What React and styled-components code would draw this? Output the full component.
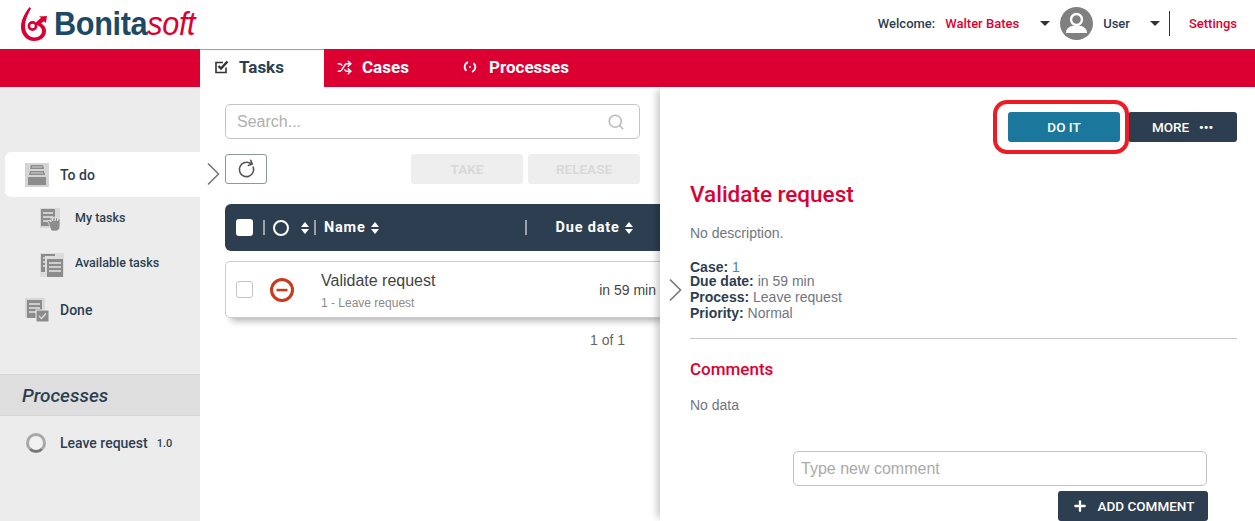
import React from "react";
import styled, { createGlobalStyle } from "styled-components";
import { RotateCw, Search, Shuffle, Plus } from "lucide-react";

const RED = "#dc0032";
const NAVY = "#2c3e50";
const HEADING = '"Roboto", "Liberation Sans", sans-serif';
const BODY = '"Liberation Sans", Arial, sans-serif';

const GlobalStyle = createGlobalStyle`
  html, body {
    margin: 0;
    height: 521px;
    overflow: hidden;
    background: #fff;
    font-family: ${BODY};
  }
  * { box-sizing: border-box; }
`;

const Page = styled.div`
  position: relative;
  width: 1255px;
  height: 521px;
  overflow: hidden;
  display: flex;
  flex-direction: column;
`;

const Header = styled.header`
  height: 49px;
  display: flex;
  align-items: center;
  justify-content: space-between;
  padding: 0 18px 2px 20px;
`;
const Logo = styled.div`
  display: flex;
  align-items: center;
  gap: 4px;
`;
const LogoText = styled.div`
  font-family: "Liberation Sans Narrow", "Liberation Sans", sans-serif;
  font-weight: 700;
  font-size: 33px;
  line-height: 36px;
  letter-spacing: -0.4px;
  color: #1c4a66;
  width: 126px;
  transform: scaleX(0.93);
  transform-origin: left center;
  white-space: nowrap;
  padding-top: 1px;
`;
const LogoAccent = styled.span`
  color: ${RED};
  font-style: italic;
  font-weight: 400;
`;
const UserBar = styled.div`
  display: flex;
  align-items: center;
  font-family: ${HEADING};
  font-size: 13px;
  font-weight: 500;
  color: ${NAVY};
`;
const UserLink = styled.span`
  color: ${({ $red }) => ($red ? RED : NAVY)};
  margin-left: ${({ $gap }) => $gap || 0}px;
`;
const Caret = styled.span`
  width: 0;
  height: 0;
  margin-left: ${({ $gap }) => $gap}px;
  border-left: 5px solid transparent;
  border-right: 5px solid transparent;
  border-top: 5px solid #333;
`;
const Rule = styled.span`
  width: 1px;
  height: 25px;
  margin: 0 19px 0 9px;
  background: #333;
`;

const NavBar = styled.nav`
  height: 38px;
  background: ${RED};
  padding-left: 200px;
  display: flex;
  align-items: stretch;
`;
const NavTab = styled.div`
  width: ${({ $w }) => $w}px;
  display: flex;
  align-items: center;
  gap: ${({ $gap }) => $gap}px;
  padding-left: ${({ $pad }) => $pad}px;
  padding-bottom: 2px;
  font-family: ${HEADING};
  font-size: 17px;
  font-weight: 700;
  color: ${({ $active }) => ($active ? NAVY : "#fff")};
  background: ${({ $active }) => ($active ? "#fff" : "transparent")};
  box-shadow: ${({ $active }) => ($active ? "inset 0 2px 1px -1px #999" : "none")};
`;

const Main = styled.main`
  flex: 1;
  display: flex;
  min-height: 0;
`;

const Sidebar = styled.aside`
  width: 200px;
  background: #ececec;
  padding-top: 65px;
  font-family: ${HEADING};
  font-weight: 500;
  color: ${NAVY};
`;
const NavItem = styled.div`
  height: 45px;
  margin-left: 5px;
  padding-left: ${({ $sub }) => ($sub ? 35 : 20)}px;
  display: flex;
  align-items: center;
  gap: ${({ $sub }) => ($sub ? 11 : 11)}px;
  font-size: ${({ $sub }) => ($sub ? 12.5 : 14)}px;
  background: ${({ $active }) => ($active ? "#fff" : "transparent")};
  border-radius: 6px 0 0 6px;
`;
const NavLabel = styled.span`
  position: relative;
  top: ${({ $sub }) => ($sub ? -2 : 0)}px;
`;
const SectionTitle = styled.div`
  margin-top: 42px;
  height: 42px;
  padding-left: 22px;
  display: flex;
  align-items: center;
  font-size: 19px;
  font-style: italic;
  font-weight: 500;
  background: #dedede;
  border-top: 1px solid #d6d6d6;
  border-bottom: 1px solid #d6d6d6;
`;
const ProcessRow = styled.div`
  height: 54px;
  padding-left: 26px;
  display: flex;
  align-items: center;
  font-size: 14px;
`;
const Ring = styled.span`
  width: 20px;
  height: 20px;
  margin-right: 14px;
  border-radius: 50%;
  border: 3px solid #a8a8a8;
  border-bottom-color: #777;
  background: #f2f2f2;
`;
const Version = styled.span`
  margin-left: 9px;
  font-size: 11px;
`;

const ListPane = styled.section`
  width: 460px;
  padding: 17px 0 0 25px;
  position: relative;
`;
const SearchBox = styled.div`
  width: 415px;
  height: 35px;
  padding: 0 14px 0 11px;
  display: flex;
  align-items: center;
  justify-content: space-between;
  border: 1px solid #c4c4c4;
  border-radius: 5px;
  font-size: 16px;
  color: #b0b0b0;
`;
const Toolbar = styled.div`
  width: 415px;
  margin-top: 15px;
  display: flex;
  gap: 5px;
`;
const RefreshButton = styled.div`
  width: 42px;
  height: 30px;
  margin-right: auto;
  display: flex;
  align-items: center;
  justify-content: center;
  border: 1px solid #8a9a9a;
  border-radius: 3px;
  color: #555;
`;
const GhostButton = styled.div`
  width: 112px;
  height: 30px;
  display: flex;
  align-items: center;
  justify-content: center;
  background: #eeeeee;
  border-radius: 3px;
  font-family: ${HEADING};
  font-size: 13.5px;
  font-weight: 700;
  color: #d9d9d9;
`;
const TableHead = styled.div`
  height: 47px;
  margin-top: 20px;
  background: ${NAVY};
  border-radius: 6px 0 0 6px;
  display: flex;
  align-items: center;
  font-family: ${HEADING};
  font-size: 14.5px;
  font-weight: 700;
  letter-spacing: 0.8px;
  color: #fff;
  position: relative;
  z-index: 1;
`;
const HeadCheck = styled.span`
  width: 17px;
  height: 17px;
  margin-left: 11px;
  background: #fff;
  border-radius: 3px;
`;
const HeadSep = styled.span`
  width: 2px;
  height: 15px;
  margin-left: ${({ $gap }) => $gap}px;
  background: #9aa3ad;
`;
const HeadCircle = styled.span`
  width: 16px;
  height: 16px;
  margin-left: 8px;
  border: 2px solid #fff;
  border-radius: 50%;
`;
const Sort = styled.span`
  margin-left: ${({ $gap }) => $gap}px;
  display: inline-flex;
  flex-direction: column;
  gap: 2px;
  &::before, &::after {
    content: "";
    width: 0;
    height: 0;
    border-left: 4.5px solid transparent;
    border-right: 4.5px solid transparent;
  }
  &::before { border-bottom: 5px solid #fff; }
  &::after { border-top: 5px solid #fff; }
`;
const HeadLabel = styled.span`
  margin-left: ${({ $gap }) => $gap}px;
`;
const TaskRow = styled.div`
  height: 57px;
  margin-top: 10px;
  display: flex;
  align-items: center;
  background: #fff;
  border: 1px solid #ccc;
  border-right: 0;
  border-radius: 5px 0 0 5px;
  box-shadow: 4px 5px 7px -2px rgba(0, 0, 0, 0.3);
`;
const RowCheck = styled.span`
  width: 17px;
  height: 17px;
  margin-left: 10px;
  border: 1px solid #c4c4c4;
  border-radius: 3px;
`;
const RowIcon = styled.svg`
  width: 26px;
  height: 26px;
  margin-left: 16px;
`;
const RowText = styled.div`
  margin-left: 26px;
  flex: 1;
`;
const RowTitle = styled.div`
  font-size: 16px;
  line-height: 20px;
  color: #444;
  margin-top: 3px;
`;
const RowSub = styled.div`
  font-size: 12px;
  line-height: 16px;
  margin-top: 4px;
  color: #8a8a8a;
`;
const RowDue = styled.div`
  font-size: 14px;
  color: #444;
  margin-right: 4px;
`;
const Pager = styled.div`
  width: 400px;
  margin-top: 14px;
  text-align: right;
  font-size: 14px;
  color: #666;
`;

const DetailPane = styled.section`
  flex: 1;
  position: relative;
  z-index: 2;
  padding: 25px 18px 0 30px;
  background: #fff;
  box-shadow: -6px 0 7px -3px rgba(0, 0, 0, 0.22);
`;
const Actions = styled.div`
  display: flex;
  justify-content: flex-end;
  gap: 8px;
`;
const ActionButton = styled.div`
  width: ${({ $w }) => $w}px;
  height: 30px;
  display: flex;
  align-items: center;
  justify-content: center;
  gap: 10px;
  background: ${({ $teal }) => ($teal ? "#1b779b" : NAVY)};
  border-radius: 3px;
  font-family: ${HEADING};
  font-size: 13.5px;
  font-weight: 500;
  color: #fff;
`;
const Dots = styled.span`
  font-size: 13px;
  letter-spacing: 0;
  line-height: 1;
  font-weight: 700;
`;
const Highlight = styled.div`
  position: absolute;
  left: 333px;
  top: 13px;
  width: 136px;
  height: 54px;
  border: 4px solid #ed1c24;
  border-radius: 14px;
`;
const DetailTitle = styled.h1`
  margin: 38px 0 0;
  font-family: ${HEADING};
  font-size: 22.5px;
  line-height: 28px;
  font-weight: 500;
  color: ${RED};
`;
const Muted = styled.p`
  margin: ${({ $top }) => $top}px 0 0;
  font-size: 14px;
  line-height: 16px;
  color: #6f7680;
`;
const Facts = styled.dl`
  margin: 18px 0 0;
  font-size: 14px;
  color: #6f7680;
`;
const Fact = styled.div`
  height: ${({ $h }) => $h || 16}px;
  line-height: 16px;
`;
const FactName = styled.dt`
  display: inline;
  font-weight: 700;
  color: ${NAVY};
`;
const FactValue = styled.dd`
  display: inline;
  margin: 0;
  color: ${({ $link }) => ($link ? "#4a86a8" : "#6f7680")};
`;
const Divider = styled.hr`
  margin: 17px 0 0;
  border: 0;
  border-top: 1px solid #c8c8c8;
`;
const SubHeading = styled.h2`
  margin: 19px 0 0;
  font-family: ${HEADING};
  font-size: 17px;
  line-height: 22px;
  font-weight: 500;
  color: ${RED};
`;
const CommentForm = styled.div`
  margin-top: 38px;
  margin-left: 103px;
  width: 415px;
  display: flex;
  flex-direction: column;
  align-items: flex-end;
`;
const CommentInput = styled.div`
  width: 414px;
  height: 35px;
  align-self: flex-start;
  padding-left: 7px;
  display: flex;
  align-items: center;
  border: 1px solid #c4c4c4;
  border-radius: 5px;
  font-size: 16px;
  color: #aaa;
`;
const AddButton = styled.div`
  width: 150px;
  height: 30px;
  margin-top: 5px;
  display: flex;
  align-items: center;
  justify-content: center;
  gap: 10px;
  background: ${NAVY};
  border-radius: 3px;
  font-family: ${HEADING};
  font-size: 13.5px;
  font-weight: 500;
  color: #fff;
`;
const Chevron = styled.svg`
  position: absolute;
  width: 14px;
  height: 24px;
  left: ${({ $x }) => $x}px;
  top: ${({ $y }) => $y}px;
  z-index: 3;
`;

const ChevronMark = ({ x, y }) => (
  <Chevron $x={x} $y={y} viewBox="0 0 14 24">
    <path d="M2 1.5 12.5 12 2 22.5" fill="none" stroke="#777" strokeWidth="1.6" />
  </Chevron>
);

const LogoMark = () => (
  <svg width="30" height="36" viewBox="0 0 30 36">
    <path
      d="M9.5 1C5 7 1 13.5 1 21c0 8 6 14 13 14 7.5 0 12-4.5 12-10 0-3.5-2-6-5-7.5l3-2.2 1.800 1.700L27 10l-8 .5 2 1.500-4 3.200c-2 1.600-1.500 3.200.5 4 2.500 1 4.500 3 4.500 5.800 0 3.500-3 6.500-7.500 6.500C9.500 31.500 5 27 5 20.500 5 14 8 8 11 2.500Z"
      fill={RED}
    />
    <circle cx="12.500" cy="20" r="3.600" fill="none" stroke={RED} strokeWidth="2.600" />
  </svg>
);

const Avatar = () => (
  <svg width="33" height="33" viewBox="0 0 33 33">
    <circle cx="16.500" cy="16.500" r="16.500" fill="#808080" />
    <circle cx="16.500" cy="12.500" r="5.500" fill="none" stroke="#fff" strokeWidth="2.400" />
    <path d="M6 26c0-5 4-7.500 10.500-7.500S27 21 27 26Z" fill="#fff" />
  </svg>
);

const CheckSquareIcon = () => (
  <svg width="14" height="14" viewBox="0 0 14 14">
    <path d="M11 7.500V12.500H1V2.500H8" fill="none" stroke="#333" strokeWidth="1.600" />
    <path d="M3.500 6 6 8.500 12.500 1.500" fill="none" stroke="#333" strokeWidth="2.400" />
  </svg>
);

const ProcessIcon = () => (
  <svg width="14" height="14" viewBox="0 0 14 14" fill="none" stroke="#fff" strokeWidth="1.800">
    <path d="M5 2.200A5 5 0 0 0 3.500 10.800" />
    <path d="M9 11.800A5 5 0 0 0 10.500 3.200" />
    <circle cx="7" cy="7" r="1" fill="#fff" stroke="none" />
  </svg>
);

const InboxIcon = () => (
  <svg width="24" height="24" viewBox="0 0 24 24">
    <rect width="24" height="24" fill="#d4d4d4" />
    <path d="M6 2h12l1 4H5ZM5 8h14l1 4H4ZM3 14h18v8H3Z" fill="#8c8c8c" />
    <path d="M7 4h10M6 10h12" stroke="#d4d4d4" />
  </svg>
);

const SheetLines = ({ x, y, w, h }) => (
  <g>
    <rect x={x} y={y} width={w} height={h} fill="#8c8c8c" />
    <path
      d={`M${x + 2} ${y + 4}h${w - 4}M${x + 2} ${y + 8}h${w - 4}M${x + 2} ${y + 12}h${w - 4}`}
      stroke="#e4e4e4"
      strokeWidth="1.300"
    />
  </g>
);

const HandIcon = () => (
  <svg width="24" height="24" viewBox="0 0 24 24">
    <rect width="20" height="20" fill="#d8d8d8" />
    <SheetLines x={1} y={1} w={14} h={17} />
    <path
      d="M9 16 7.500 13l1.500-.5 2 1.500V9.500h1.500V13l1-4h1.500v4l1-3.500h1.500V13l1-2.500h1.500V18c0 3-2 5-4.500 5h-3C11 23 10 20 9 16Z"
      fill="#8c8c8c"
      stroke="#eee"
      strokeWidth=".7"
    />
  </svg>
);

const StackIcon = () => (
  <svg width="24" height="24" viewBox="0 0 24 24">
    <rect width="24" height="24" fill="#dcdcdc" />
    <SheetLines x={1} y={1} w={14} h={18} />
    <rect x={5} y={3} width={18} height={21} fill="#dcdcdc" />
    <SheetLines x={7} y={6} w={16} h={18} />
  </svg>
);

const DoneIcon = () => (
  <svg width="24" height="24" viewBox="0 0 24 24">
    <rect width="20" height="20" fill="#d8d8d8" />
    <SheetLines x={2} y={2} w={15} h={18} />
    <rect x="11" y="12" width="13" height="12" fill="#8c8c8c" stroke="#eee" />
    <path d="M14 18l2.500 2.500 4.500-5" fill="none" stroke="#ddd" strokeWidth="1.400" />
  </svg>
);

const App = () => (
  <Page>
    <GlobalStyle />
    <Header>
      <Logo>
        <LogoMark />
        <LogoText>
          Bonita<LogoAccent>soft</LogoAccent>
        </LogoText>
      </Logo>
      <UserBar>
        Welcome:
        <UserLink $red $gap={10}>Walter Bates</UserLink>
        <Caret $gap={21} />
        <span style={{ display: "flex", marginLeft: 10 }}>
          <Avatar />
        </span>
        <UserLink $gap={10}>User</UserLink>
        <Caret $gap={20} />
        <Rule />
        <UserLink $red>Settings</UserLink>
      </UserBar>
    </Header>

    <NavBar>
      <NavTab $active $w={124} $pad={15} $gap={10}>
        <CheckSquareIcon /> Tasks
      </NavTab>
      <NavTab $w={124} $pad={13} $gap={10}>
        <Shuffle size={15} strokeWidth={2.4} /> Cases
      </NavTab>
      <NavTab $w={160} $pad={15} $gap={12}>
        <ProcessIcon /> Processes
      </NavTab>
    </NavBar>

    <Main>
      <Sidebar>
        <NavItem $active>
          <InboxIcon />
          <NavLabel>To do</NavLabel>
        </NavItem>
        <NavItem $sub>
          <HandIcon />
          <NavLabel $sub>My tasks</NavLabel>
        </NavItem>
        <NavItem $sub>
          <StackIcon />
          <NavLabel $sub>Available tasks</NavLabel>
        </NavItem>
        <NavItem>
          <DoneIcon />
          <NavLabel>Done</NavLabel>
        </NavItem>
        <SectionTitle>Processes</SectionTitle>
        <ProcessRow>
          <Ring />
          Leave request
          <Version>1.0</Version>
        </ProcessRow>
      </Sidebar>

      <ListPane>
        <ChevronMark x={6} y={75} />
        <SearchBox>
          Search...
          <Search size={18} color="#bdbdbd" strokeWidth={2.2} />
        </SearchBox>
        <Toolbar>
          <RefreshButton>
            <RotateCw size={19} strokeWidth={2} style={{ transform: "rotate(-20deg)" }} />
          </RefreshButton>
          <GhostButton>TAKE</GhostButton>
          <GhostButton>RELEASE</GhostButton>
        </Toolbar>
        <TableHead>
          <HeadCheck />
          <HeadSep $gap={10} />
          <HeadCircle />
          <Sort $gap={12} />
          <HeadSep $gap={5} />
          <HeadLabel $gap={8}>Name</HeadLabel>
          <Sort $gap={5} />
          <HeadSep $gap={146} />
          <HeadLabel $gap={29}>Due date</HeadLabel>
          <Sort $gap={5} />
        </TableHead>
        <TaskRow>
          <RowCheck />
          <RowIcon viewBox="0 0 26 26">
            <circle cx="13" cy="13" r="10.500" fill="#fff" stroke="#c9391c" strokeWidth="3" />
            <rect x="7.500" y="11.800" width="11" height="2.500" fill="#c9391c" />
          </RowIcon>
          <RowText>
            <RowTitle>Validate request</RowTitle>
            <RowSub>1 - Leave request</RowSub>
          </RowText>
          <RowDue>in 59 min</RowDue>
        </TaskRow>
        <Pager>1 of 1</Pager>
      </ListPane>

      <DetailPane>
        <ChevronMark x={8} y={191} />
        <Highlight />
        <Actions>
          <ActionButton $teal $w={112}>DO IT</ActionButton>
          <ActionButton $w={109}>
            MORE <Dots>•••</Dots>
          </ActionButton>
        </Actions>
        <DetailTitle>Validate request</DetailTitle>
        <Muted $top={17}>No description.</Muted>
        <Facts>
          <Fact $h={14}>
            <FactName>Case:</FactName> <FactValue $link>1</FactValue>
          </Fact>
          <Fact>
            <FactName>Due date:</FactName> <FactValue>in 59 min</FactValue>
          </Fact>
          <Fact>
            <FactName>Process:</FactName> <FactValue>Leave request</FactValue>
          </Fact>
          <Fact>
            <FactName>Priority:</FactName> <FactValue>Normal</FactValue>
          </Fact>
        </Facts>
        <Divider />
        <SubHeading>Comments</SubHeading>
        <Muted $top={17}>No data</Muted>
        <CommentForm>
          <CommentInput>Type new comment</CommentInput>
          <AddButton>
            <Plus size={16} strokeWidth={3.5} /> ADD COMMENT
          </AddButton>
        </CommentForm>
      </DetailPane>
    </Main>
  </Page>
);

export default App;
